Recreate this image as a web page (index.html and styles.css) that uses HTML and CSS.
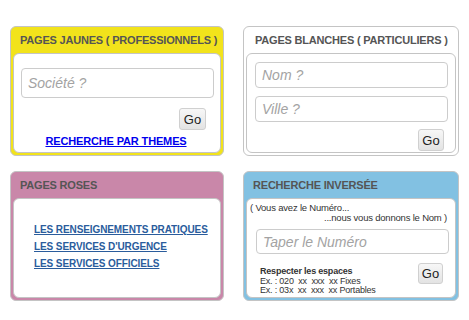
FILE: index.html
```html
<!DOCTYPE html>
<html>
<head>
<meta charset="utf-8">
<link rel="stylesheet" href="styles.css">
</head>
<body>
<div class="grid">
  <div class="panel yellow">
    <div class="head">PAGES JAUNES ( PROFESSIONNELS )</div>
    <div class="inner inner-pj">
      <input class="field tall" type="text" placeholder="Société ?">
      <div class="btn-row"><button class="go">Go</button></div>
      <div class="theme-row"><a href="#" class="theme">RECHERCHE PAR THEMES</a></div>
    </div>
  </div>
  <div class="panel white">
    <div class="head">PAGES BLANCHES ( PARTICULIERS )</div>
    <div class="inner inner-pb">
      <input class="field" type="text" placeholder="Nom ?">
      <input class="field" type="text" placeholder="Ville ?">
      <div class="btn-row"><button class="go">Go</button></div>
    </div>
  </div>
  <div class="panel pink">
    <div class="head">PAGES ROSES</div>
    <div class="inner inner-pr">
      <a href="#" class="rose">LES RENSEIGNEMENTS PRATIQUES</a>
      <a href="#" class="rose">LES SERVICES D'URGENCE</a>
      <a href="#" class="rose">LES SERVICES OFFICIELS</a>
    </div>
  </div>
  <div class="panel blue">
    <div class="head">RECHERCHE INVERSÉE</div>
    <div class="inner inner-ri">
      <div class="intro1">( Vous avez le Numéro...</div>
      <div class="intro2">...nous vous donnons le Nom )</div>
      <input class="field" type="text" placeholder="Taper le Numéro">
      <div class="bottom">
        <div class="notes">
          <div class="resp">Respecter les espaces</div>
          <div class="ex">Ex. : 020  xx  xxx  xx Fixes</div>
          <div class="ex">Ex. : 03x  xx  xxx  xx Portables</div>
        </div>
        <button class="go">Go</button>
      </div>
    </div>
  </div>
</div>
</body>
</html>
```
FILE: styles.css
```css
html, body {
  margin: 0;
  padding: 0;
  background: #fff;
  font-family: "Liberation Sans", Arial, sans-serif;
}
.grid {
  display: grid;
  grid-template-columns: 214px 216px;
  grid-template-rows: 130px 130px;
  column-gap: 19px;
  row-gap: 15px;
  padding: 26px 0 0 10px;
}
.panel {
  box-sizing: border-box;
  border: 1px solid #c4c4c4;
  border-radius: 6px;
  padding: 0 2px 2px 2px;
  display: flex;
  flex-direction: column;
}
.yellow { background: #f2e31b; }
.white { background: #fff; }
.pink { background: #c987a9; }
.blue { background: #82c1e2; }
.head {
  height: 26px;
  flex: none;
  box-sizing: border-box;
  padding: 0 0 0 7px;
  font-size: 11px;
  font-weight: bold;
  letter-spacing: -0.2px;
  color: #555;
  line-height: 26px;
  white-space: nowrap;
}
.white .head { padding-left: 9px; }
.inner {
  flex: 1;
  background: #fff;
  border: 1px solid #c4c4c4;
  border-radius: 6px;
  box-sizing: border-box;
  display: flex;
  flex-direction: column;
}
.field {
  box-sizing: border-box;
  height: 26px;
  border: 1px solid #ccc;
  border-radius: 4px;
  padding: 0 6px;
  font-family: "Liberation Sans", Arial, sans-serif;
  font-size: 14px;
  font-style: italic;
  color: #999;
  background: #fff;
  outline: none;
}
.field::placeholder { color: #a3a3a3; font-style: italic; }
.tall { height: 30px; }
.btn-row {
  display: flex;
  justify-content: flex-end;
}
.go {
  box-sizing: border-box;
  height: 22px;
  width: 26px;
  padding: 0;
  border: 1px solid #d0d0d0;
  border-radius: 3px;
  background: linear-gradient(#f7f7f7, #e3e3e3);
  font-family: "Liberation Sans", Arial, sans-serif;
  font-size: 13px;
  color: #222;
}
.inner-pj { padding: 14px 7px 0 7px; }
.inner-pj .field { width: 193px; }
.inner-pj .btn-row { margin-top: 10px; padding-right: 7px; }
.inner-pj .go { width: 27px; }
.theme-row {
  display: flex;
  justify-content: center;
  margin-top: 5px;
  padding-right: 2px;
}
.theme {
  font-size: 11px;
  font-weight: bold;
  letter-spacing: -0.15px;
  color: #0000ee;
  text-decoration: underline;
}
.inner-pb { padding: 8px 8px 0 8px; gap: 8px; }
.inner-pb .field { width: 193px; }
.inner-pb .btn-row { margin-top: -1px; padding-right: 3px; }
.inner-pr { padding: 24px 0 0 20px; gap: 4px; }
.rose {
  font-size: 10px;
  font-weight: bold;
  letter-spacing: -0.1px;
  color: #2a5c9c;
  text-decoration: underline;
  line-height: 13px;
}
.inner-ri { padding: 4px 8px 0 3px; font-size: 9.5px; letter-spacing: -0.2px; color: #333; }
.intro1 { line-height: 10px; }
.intro2 { line-height: 10px; text-align: right; }
.inner-ri .field { width: 193px; margin: 6px 0 0 6px; height: 25px; letter-spacing: 0; }
.bottom {
  display: flex;
  align-items: flex-start;
  justify-content: space-between;
  margin-top: 9px;
  padding-left: 10px;
  padding-right: 4px;
}
.notes { padding-top: 2px; }
.resp { font-size: 9px; font-weight: bold; line-height: 12px; color: #333; letter-spacing: -0.2px; }
.ex { font-size: 9px; line-height: 9px; white-space: pre; color: #333; letter-spacing: -0.2px; }
.bottom .go { width: 25px; height: 21px; margin-top: 0; letter-spacing: 0; }
```
